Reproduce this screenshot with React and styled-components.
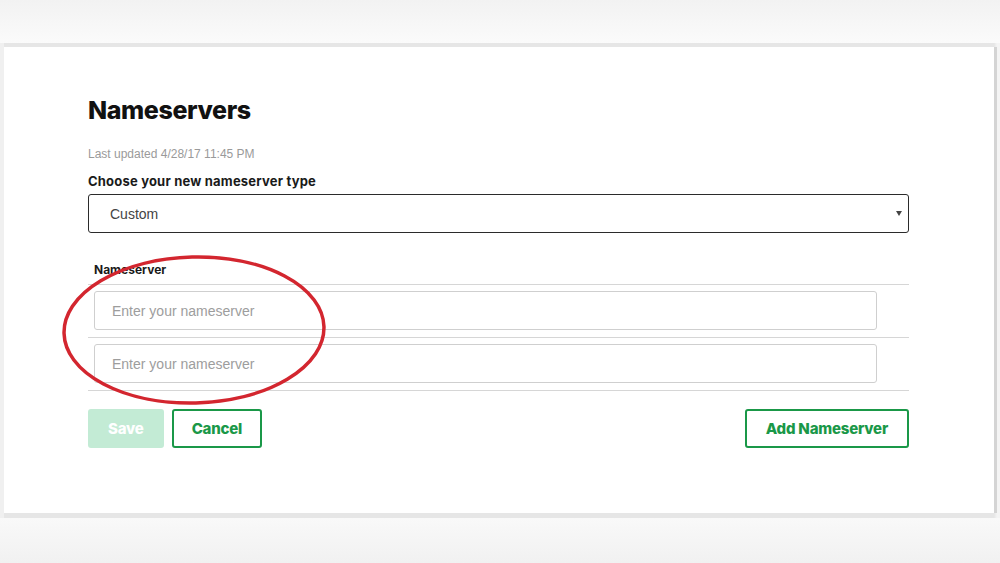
import React from "react";
import styled, { createGlobalStyle } from "styled-components";

const GlobalStyle = createGlobalStyle`
  html, body {
    margin: 0;
    padding: 0;
    background: #f7f7f7;
  }
  * { box-sizing: border-box; }
`;

const Page = styled.div`
  width: 1000px;
  height: 563px;
  overflow: hidden;
  display: flex;
  flex-direction: column;
  background: linear-gradient(#f2f2f2 0%, #fbfbfb 8%, #fbfbfb 90%, #f1f1f1 100%);
`;

const TopSpace = styled.div`
  height: 43px;
  flex: none;
`;

const Frame = styled.div`
  height: 475px;
  flex: none;
  padding: 4px 6px 5px 4px;
  background: linear-gradient(90deg, #f0f0f0 0px, #f0f0f0 4px, #e6e6e6 4px, #e6e6e6 994px, #f4f4f4 997px);
  display: flex;
`;

const Card = styled.div`
  position: relative;
  flex: 1;
  background: #fff;
  box-shadow: 3px 0 0 #d4d4d4;
  padding: 48px 85px 0 84px;
  font-family: "Liberation Sans", Arial, sans-serif;
`;

const Title = styled.h1`
  margin: 0;
  font-family: Inter, "Noto Sans", sans-serif;
  font-weight: 800;
  font-size: 25px;
  letter-spacing: -0.4px;
  line-height: 30px;
  color: #111;
`;

const Updated = styled.div`
  margin-top: 22px;
  font-size: 12px;
  line-height: 14px;
  color: #9a9a9a;
`;

const Label = styled.div`
  margin-top: 12px;
  font-family: Inter, "Noto Sans", sans-serif;
  font-weight: 700;
  font-size: 13px;
  letter-spacing: 0.2px;
  line-height: 16px;
  color: #1a1a1a;
`;

const SelectBox = styled.div`
  margin-top: 5px;
  height: 39px;
  border: 1px solid #2b2b2b;
  border-radius: 3px;
  display: flex;
  align-items: center;
  justify-content: space-between;
  padding: 0 6px 0 21px;
  font-size: 14px;
  color: #444;
`;

const Caret = styled.span`
  width: 0;
  height: 0;
  border-left: 3px solid transparent;
  border-right: 3px solid transparent;
  border-top: 5px solid #444;
`;

const Table = styled.div`
  margin-top: 30px;
`;

const HeadCell = styled.div`
  padding: 0 0 7px 6px;
  font-family: Inter, "Noto Sans", sans-serif;
  font-weight: 700;
  font-size: 12px;
  line-height: 14px;
  color: #1a1a1a;
`;

const Row = styled.div`
  border-top: 1px solid #d6d6d6;
  padding: 6px 32px 7px 6px;
  &:last-child {
    border-bottom: 1px solid #d6d6d6;
  }
`;

const Input = styled.input`
  display: block;
  width: 100%;
  height: 39px;
  border: 1px solid #cfcfcf;
  border-radius: 3px;
  padding: 0 17px;
  font-family: "Liberation Sans", Arial, sans-serif;
  font-size: 14px;
  color: #333;
  outline: none;
  &::placeholder {
    color: #9d9d9d;
  }
`;

const Actions = styled.div`
  margin-top: 18px;
  display: flex;
  align-items: center;
  gap: 8px;
`;

const Button = styled.button`
  height: 39px;
  padding: 0 ${(p) => p.$pad || 18}px;
  border-radius: 3px;
  font-family: Inter, "Noto Sans", sans-serif;
  font-weight: 800;
  font-size: 15px;
  letter-spacing: -0.2px;
  cursor: pointer;
  border: 2px solid ${(p) => (p.$disabled ? "#c3ebd5" : "#1a9848")};
  background: ${(p) => (p.$disabled ? "#c3ebd5" : "#fff")};
  color: ${(p) => (p.$disabled ? "#fff" : "#1a9848")};
  margin-left: ${(p) => (p.$push ? "auto" : "0")};
`;

const Annotation = styled.svg`
  position: absolute;
  left: 56px;
  top: 202px;
  pointer-events: none;
`;

export default function App() {
  return (
    <>
      <GlobalStyle />
      <Page>
        <TopSpace />
        <Frame>
          <Card>
            <Title>Nameservers</Title>
            <Updated>Last updated 4/28/17 11:45 PM</Updated>
            <Label>Choose your new nameserver type</Label>
            <SelectBox>
              <span>Custom</span>
              <Caret />
            </SelectBox>
            <Table>
              <HeadCell>Nameserver</HeadCell>
              <Row>
                <Input placeholder="Enter your nameserver" />
              </Row>
              <Row>
                <Input placeholder="Enter your nameserver" />
              </Row>
            </Table>
            <Actions>
              <Button $disabled $pad={18}>Save</Button>
              <Button $pad={18}>Cancel</Button>
              <Button $push $pad={19}>Add Nameserver</Button>
            </Actions>
            <Annotation width="280" height="165" viewBox="0 0 280 165">
              <ellipse
                cx="134"
                cy="81"
                rx="130"
                ry="73"
                fill="none"
                stroke="#d3262f"
                strokeWidth="3.5"
                transform="rotate(-1.5 134 81)"
              />
            </Annotation>
          </Card>
        </Frame>
      </Page>
    </>
  );
}
